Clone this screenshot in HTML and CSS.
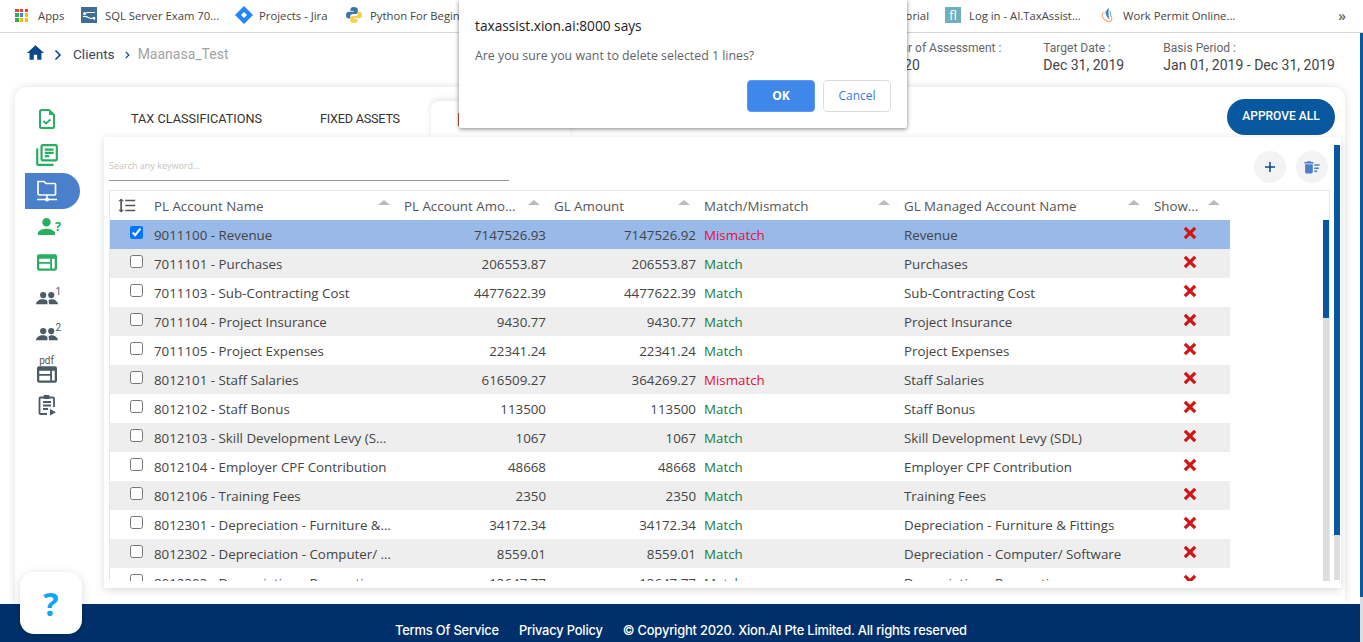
FILE: index.html
```html
<!DOCTYPE html>
<html lang="en">
<head>
<meta charset="utf-8">
<title>Clients - Maanasa_Test</title>
<link rel="stylesheet" href="styles.css">
</head>
<body>
<svg class="defs" width="0" height="0" aria-hidden="true">
  <symbol id="ic-group" viewBox="0 0 26 16">
    <circle cx="8.500" cy="4.500" r="3.700"/><circle cx="18" cy="4.500" r="3.700"/>
    <path d="M0 15.500c0-3.600 4-6 8-6 2.400 0 4.400.8 5.500 2.100v3.900z"/>
    <path d="M14.800 11c1-1 2.200-1.500 3.500-1.500 3.300 0 7.700 2.400 7.700 6H15.500z"/>
  </symbol>
  <symbol id="ic-table" viewBox="0 0 22 18">
    <path fill-rule="evenodd" d="M2 0h18a2 2 0 0 1 2 2v14a2 2 0 0 1-2 2H2a2 2 0 0 1-2-2V2a2 2 0 0 1 2-2zM2.500 5v3.500h12V5zm0 5.500V15.500h12v-5zM16.500 5v10.500h3V5z"/>
  </symbol>
  <symbol id="ic-x" viewBox="0 0 14 14">
    <path d="M3 .7 7 4.700l4-4L13.300 3l-4 4 4 4L11 13.300l-4-4-4 4L.7 11l4-4-4-4z"/>
  </symbol>
</svg>

<header class="bookmarks">
  <div class="bm">
    <span class="apps"><i class="r"></i><i class="r"></i><i class="r"></i><i class="g"></i><i class="b"></i><i class="y"></i><i class="g"></i><i class="y"></i><i class="y"></i></span>
    <span class="bm-t">Apps</span>
  </div>
  <div class="bm bm-sql">
    <svg class="fav" viewBox="0 0 16 16"><rect width="16" height="16" fill="#3f6d93"/><path d="M14 5.500H7C5.500 5.500 4 6 2.500 7.500M2.500 7.500l2.500-.5M2.500 7.500 3.500 5M2 9.500c3-.5 5 .5 6.500 1.500 1.500.7 3.500.7 5.500-.5M14 10.500l-2.500 0M14 10.500 13 13" stroke="#fff" stroke-width="1.200" fill="none"/></svg>
    <span class="bm-t">SQL Server Exam 70...</span>
  </div>
  <div class="bm bm-jira">
    <svg class="fav" viewBox="0 0 18 18"><path d="M9 0l9 9-9 9-9-9z" fill="#2684ff"/><path d="M9 6l3 3-3 3-3-3z" fill="#fff"/></svg>
    <span class="bm-t">Projects - Jira</span>
  </div>
  <div class="bm bm-py">
    <svg class="fav" viewBox="0 0 16 16"><path d="M8 0C5 0 4.500 1 4.500 2.500V4H8v.7H3C1 4.700 0 6 0 8s1 3.500 2.800 3.500H4.200V9.600c0-1.500 1.300-2.600 2.800-2.600h2.800c1.200 0 2-1 2-2.100V2.500C11.800 1 10.500 0 8 0z" fill="#3c76a8"/><path d="M8 16c3 0 3.500-1 3.500-2.500V12H8v-.7h5c2 0 3-1.300 3-3.300s-1-3.500-2.800-3.500h-1.400v1.900c0 1.500-1.300 2.600-2.800 2.600H6.200c-1.200 0-2 1-2 2.100v2.400C4.200 15 5.500 16 8 16z" fill="#f7d04b"/></svg>
    <span class="bm-t">Python For Beginners</span>
    <span class="bm-t bm-end">Tutorial</span>
  </div>
  <div class="bm bm-fl">
    <span class="fl">fl</span>
    <span class="bm-t">Log in - AI.TaxAssist...</span>
  </div>
  <div class="bm bm-wp">
    <svg class="fav" viewBox="0 0 16 18"><path d="M3 6C.5 8 1 12 5 15c3 2 6 2 7 0 .8-2 0-4-1-5" fill="none" stroke="#f0a860" stroke-width="1.300"/><path d="M9 1C6 3 5 6 6 9c.8 2.500 2.500 4 4 5-1.500-3-2-7-1-13z" fill="#2f7fc1"/><path d="M10 3c-.5 3 0 6 2 9-.3-3-.7-6-2-9z" fill="#6aa7d8"/><path d="M6 3.500C4.500 5 4 7 4.500 9c.3-2 .8-4 1.500-5.500z" fill="#4b95d0"/></svg>
    <span class="bm-t">Work Permit Online...</span>
  </div>
  <span class="bm-more">»</span>
</header>

<div class="viewport">
  <div class="page">
    <section class="topbar">
      <nav class="crumbs">
        <svg class="home" viewBox="2 3 20 17"><path d="M10 20v-6h4v6h5v-8h3L12 3 2 12h3v8z"/></svg>
        <svg class="chev chev-1" viewBox="0 0 8 12"><path d="M1.500 1.500 6 6l-4.500 4.500" fill="none" stroke="#07498a" stroke-width="1.600"/></svg>
        <span class="crumb">Clients</span>
        <svg class="chev chev-2" viewBox="0 0 8 12"><path d="M2 2.500 5.500 6 2 9.500" fill="none" stroke="#07498a" stroke-width="1.400"/></svg>
        <span class="crumb crumb-cur">Maanasa_Test</span>
      </nav>
      <div class="meta">
        <div class="meta-i meta-y"><span class="meta-l">Year of Assessment :</span><span class="meta-v">2020</span></div>
        <div class="meta-i meta-t"><span class="meta-l">Target Date :</span><span class="meta-v">Dec 31, 2019</span></div>
        <div class="meta-i"><span class="meta-l">Basis Period :</span><span class="meta-v">Jan 01, 2019 - Dec 31, 2019</span></div>
      </div>
    </section>

    <main class="card">
      <aside class="side">
        <div class="side-i"><svg width="16" height="20" viewBox="0 0 16 20"><path d="M2.500 1H10l5 5v11.500a1.500 1.500 0 0 1-1.500 1.500h-11A1.500 1.500 0 0 1 1 17.500v-15A1.500 1.500 0 0 1 2.500 1z" fill="none" stroke="#27ae60" stroke-width="2"/><path d="M10 1l5 5h-5z" fill="#27ae60"/><path d="M4.500 12l2.500 2.500 4.500-4" fill="none" stroke="#27ae60" stroke-width="1.800"/></svg></div>
        <div class="side-i"><svg width="24" height="24" viewBox="1 1 22 22" fill="#27ae60"><path d="M4 6H2v14c0 1.100.9 2 2 2h14v-2H4V6zm16-4H8c-1.100 0-2 .9-2 2v12c0 1.100.9 2 2 2h12c1.100 0 2-.9 2-2V4c0-1.100-.9-2-2-2zm0 14H8V4h12v12zM10 9h8v2h-8zm0 3h4v2h-4zm0-6h8v2h-8z"/></svg></div>
        <div class="side-i side-on"><svg width="22" height="23" viewBox="0 0 22 23"><path d="M2 2.500h6l2 2h8.500a1 1 0 0 1 1 1V15a1 1 0 0 1-1 1h-15A1.500 1.500 0 0 1 2 14.500z" fill="none" stroke="#fff" stroke-width="1.700"/><path d="M11 16v3M1 20.500h20" stroke="#fff" stroke-width="1.500"/><circle cx="11" cy="20.500" r="2" fill="#fff"/></svg></div>
        <div class="side-i"><span class="ic-wrap"><svg width="17" height="17" viewBox="4 4 16 16" fill="#27ae60"><path d="M12 12c2.210 0 4-1.790 4-4s-1.790-4-4-4-4 1.790-4 4 1.790 4 4 4zm0 2c-2.670 0-8 1.340-8 4v2h16v-2c0-2.660-5.330-4-8-4z"/></svg><b class="q">?</b></span></div>
        <div class="side-i"><svg class="t-g" width="20" height="17"><use href="#ic-table"/></svg></div>
        <div class="side-i"><span class="ic-wrap"><svg class="t-s" width="22" height="14"><use href="#ic-group"/></svg><small class="sup">1</small></span></div>
        <div class="side-i"><span class="ic-wrap"><svg class="t-s" width="22" height="14"><use href="#ic-group"/></svg><small class="sup">2</small></span></div>
        <div class="side-i side-pdf"><small class="pdf">pdf</small><svg class="t-s" width="20" height="17"><use href="#ic-table"/></svg></div>
        <div class="side-i"><svg width="20" height="22" viewBox="0 0 20 22"><path d="M7 2.500h5M3.500 3.500H16a1 1 0 0 1 1 1V13M10 20H3.500a1 1 0 0 1-1-1V4.500a1 1 0 0 1 1-1M6 8h8M6 11.500h8M6 15h5" fill="none" stroke="#4a5b66" stroke-width="1.800"/><rect x="6.500" y="1" width="6" height="4" rx="1" fill="#4a5b66"/><path d="M13 15l6 3.200-6 3.200z" fill="#4a5b66"/></svg></div>
      </aside>

      <div class="content">
        <div class="tabbar">
          <div class="tabs">
            <span class="tab">TAX CLASSIFICATIONS</span>
            <span class="tab tab-2">FIXED ASSETS</span>
            <span class="tab tab-on"><i class="tab-mark"></i></span>
          </div>
          <button class="approve">APPROVE ALL</button>
        </div>

        <section class="panel">
          <div class="tools">
            <input class="search" placeholder="Search any keyword...">
            <div class="tool-btns">
              <button class="round" aria-label="Add"><svg width="12" height="12" viewBox="0 0 12 12"><path d="M6 1v10M1 6h10" stroke="#07498a" stroke-width="1.500"/></svg></button>
              <button class="round" aria-label="Delete"><svg width="16" height="14" viewBox="1.500 3.500 21 16" fill="#4a80c9"><path d="M15 16h4v2h-4zm0-8h7v2h-7zm0 4h6v2h-6zM3 18c0 1.100.9 2 2 2h6c1.100 0 2-.9 2-2V8H3v10zM14 5h-3l-1-1H6L5 5H2v2h12z"/></svg></button>
            </div>
          </div>

          <div class="grid-wrap">
            <table class="grid">
              <colgroup><col class="c0"><col class="c1"><col class="c2"><col class="c2"><col class="c3"><col class="c1"><col class="c4"></colgroup>
              <thead>
                <tr>
                  <th class="sorter"><svg width="19" height="15" viewBox="0 3 23 18" fill="#555"><path d="M6 7h2.500L5 3.500 1.500 7H4v10H1.500L5 20.500 8.500 17H6V7zm4-2v2h12V5H10zm0 14h12v-2H10v2zm0-6h12v-2H10v2z"/></svg></th>
                  <th><div class="th"><span class="th-t">PL Account Name</span><i class="tri"></i></div></th>
                  <th><div class="th"><span class="th-t">PL Account Amo...</span><i class="tri"></i></div></th>
                  <th><div class="th"><span class="th-t">GL Amount</span><i class="tri"></i></div></th>
                  <th><div class="th"><span class="th-t">Match/Mismatch</span><i class="tri"></i></div></th>
                  <th><div class="th"><span class="th-t">GL Managed Account Name</span><i class="tri"></i></div></th>
                  <th><div class="th"><span class="th-t">Show...</span><i class="tri"></i></div></th>
                </tr>
              </thead>
              <tbody>
                <tr class="sel"><td class="ck"><input type="checkbox" checked></td><td>9011100 - Revenue</td><td class="n">7147526.93</td><td class="n">7147526.92</td><td class="bad">Mismatch</td><td>Revenue</td><td class="x"><svg class="xi"><use href="#ic-x"/></svg></td></tr>
                <tr><td class="ck"><input type="checkbox"></td><td>7011101 - Purchases</td><td class="n">206553.87</td><td class="n">206553.87</td><td class="ok">Match</td><td>Purchases</td><td class="x"><svg class="xi"><use href="#ic-x"/></svg></td></tr>
                <tr><td class="ck"><input type="checkbox"></td><td>7011103 - Sub-Contracting Cost</td><td class="n">4477622.39</td><td class="n">4477622.39</td><td class="ok">Match</td><td>Sub-Contracting Cost</td><td class="x"><svg class="xi"><use href="#ic-x"/></svg></td></tr>
                <tr><td class="ck"><input type="checkbox"></td><td>7011104 - Project Insurance</td><td class="n">9430.77</td><td class="n">9430.77</td><td class="ok">Match</td><td>Project Insurance</td><td class="x"><svg class="xi"><use href="#ic-x"/></svg></td></tr>
                <tr><td class="ck"><input type="checkbox"></td><td>7011105 - Project Expenses</td><td class="n">22341.24</td><td class="n">22341.24</td><td class="ok">Match</td><td>Project Expenses</td><td class="x"><svg class="xi"><use href="#ic-x"/></svg></td></tr>
                <tr><td class="ck"><input type="checkbox"></td><td>8012101 - Staff Salaries</td><td class="n">616509.27</td><td class="n">364269.27</td><td class="bad">Mismatch</td><td>Staff Salaries</td><td class="x"><svg class="xi"><use href="#ic-x"/></svg></td></tr>
                <tr><td class="ck"><input type="checkbox"></td><td>8012102 - Staff Bonus</td><td class="n">113500</td><td class="n">113500</td><td class="ok">Match</td><td>Staff Bonus</td><td class="x"><svg class="xi"><use href="#ic-x"/></svg></td></tr>
                <tr><td class="ck"><input type="checkbox"></td><td>8012103 - Skill Development Levy (SDL)</td><td class="n">1067</td><td class="n">1067</td><td class="ok">Match</td><td>Skill Development Levy (SDL)</td><td class="x"><svg class="xi"><use href="#ic-x"/></svg></td></tr>
                <tr><td class="ck"><input type="checkbox"></td><td>8012104 - Employer CPF Contribution</td><td class="n">48668</td><td class="n">48668</td><td class="ok">Match</td><td>Employer CPF Contribution</td><td class="x"><svg class="xi"><use href="#ic-x"/></svg></td></tr>
                <tr><td class="ck"><input type="checkbox"></td><td>8012106 - Training Fees</td><td class="n">2350</td><td class="n">2350</td><td class="ok">Match</td><td>Training Fees</td><td class="x"><svg class="xi"><use href="#ic-x"/></svg></td></tr>
                <tr><td class="ck"><input type="checkbox"></td><td>8012301 - Depreciation - Furniture &amp; Fittings</td><td class="n">34172.34</td><td class="n">34172.34</td><td class="ok">Match</td><td>Depreciation - Furniture &amp; Fittings</td><td class="x"><svg class="xi"><use href="#ic-x"/></svg></td></tr>
                <tr><td class="ck"><input type="checkbox"></td><td>8012302 - Depreciation - Computer/ Software</td><td class="n">8559.01</td><td class="n">8559.01</td><td class="ok">Match</td><td>Depreciation - Computer/ Software</td><td class="x"><svg class="xi"><use href="#ic-x"/></svg></td></tr>
                <tr><td class="ck"><input type="checkbox"></td><td>8012303 - Depreciation - Renovation</td><td class="n">13647.77</td><td class="n">13647.77</td><td class="ok">Match</td><td>Depreciation - Renovation</td><td class="x"><svg class="xi"><use href="#ic-x"/></svg></td></tr>
              </tbody>
            </table>
            <div class="vbar vbar-in"><i class="thumb thumb-in"></i></div>
          </div>
          <div class="vbar vbar-out"><i class="thumb thumb-out"></i></div>
        </section>
      </div>
    </main>

    <footer class="foot">
      <a>Terms Of Service</a>
      <a>Privacy Policy</a>
      <span>© Copyright 2020. Xion.AI Pte Limited. All rights reserved</span>
    </footer>
  </div>
  <div class="pagebar"><i class="pagethumb"></i></div>
</div>

<button class="help" aria-label="Help">?</button>

<div class="dialog" role="dialog">
  <div class="dlg-title">taxassist.xion.ai:8000 says</div>
  <div class="dlg-msg">Are you sure you want to delete selected 1 lines?</div>
  <div class="dlg-btns">
    <button class="dlg-ok">OK</button>
    <button class="dlg-cancel">Cancel</button>
  </div>
</div>
</body>
</html>
```

FILE: styles.css
```css
* { box-sizing: border-box; }
html, body { margin: 0; padding: 0; }
body {
  width: 1363px;
  height: 642px;
  overflow: hidden;
  position: relative;
  background: #fff;
  font-family: "Open Sans", "Liberation Sans", sans-serif;
  color: #444;
  display: flex;
  flex-direction: column;
}
.defs { position: absolute; }

/* bookmarks */
.bookmarks {
  height: 33px;
  flex: none;
  display: flex;
  align-items: center;
  padding-bottom: 2px;
  background: #fff;
  border-bottom: 1px solid #d5d5d5;
  font-size: 11.300px;
  color: #444;
  position: relative;
  z-index: 2;
}
.bm { display: flex; align-items: center; flex: none; height: 100%; }
.bm:first-child { margin-left: 15px; width: 66px; }
.bm-sql { width: 154px; }
.bm-jira { width: 111px; }
.bm-py { width: 599px; }
.bm-fl { width: 155px; }
.bm-end { margin-left: auto; padding-right: 16px; }
.bm-t { white-space: nowrap; }
.apps { display: grid; grid-template-columns: repeat(3, 3.500px); gap: 1.250px; margin-right: 10px; }
.apps i { width: 3.500px; height: 3.500px; display: block; }
.apps .r { background: #e94335; }
.apps .y { background: #fbbc05; }
.apps .b { background: #4285f4; }
.apps .g { background: #34a853; }
.fav { width: 16px; height: 16px; margin-right: 8px; flex: none; }
.bm-jira .fav { width: 18px; height: 18px; margin-right: 6px; }
.fl { width: 16px; height: 16px; margin-right: 8px; background: #6fb0bd; color: #fff; font-size: 13px; line-height: 16px; text-align: center; }
.bm-wp .fav { margin-right: 7px; }
.bm-more { margin-left: 103px; font-size: 14px; color: #666; font-weight: 600; }

/* shell */
.viewport { flex: 1; display: flex; min-height: 0; }
.page { flex: 1; display: flex; flex-direction: column; min-width: 0; }
.pagebar { width: 3px; flex: none; background: #ddd; }
.pagethumb { display: block; height: 564px; background: #07589f; }

/* top bar */
.topbar {
  height: 54px;
  flex: none;
  display: flex;
  justify-content: space-between;
  padding: 8px 25px 0 27px;
  font-family: Roboto, "Liberation Sans", sans-serif;
}
.crumbs { display: flex; align-items: center; height: 26px; font-size: 13.600px; }
.home { width: 17px; height: 15px; fill: #07498a; margin-top: -4px; }
.chev { width: 8px; height: 12px; }
.chev-1 { margin: 2px 11px 0 10px; }
.chev-2 { margin: 1px 7px 0 9px; width: 7px; }
.crumb { color: #33475b; }
.crumb-cur { color: #a3a3a3; font-size: 14px; }
.meta { display: flex; }
.meta-i { display: flex; flex-direction: column; }
.meta-y { width: 155px; }
.meta-t { width: 120px; }
.meta-l { font-size: 12px; line-height: 15px; color: #666; }
.meta-v { font-size: 14px; line-height: 19px; color: #444; }

/* card */
.card {
  flex: 1;
  min-height: 0;
  margin: 0 15px 0 15px;
  background: #fff;
  border-radius: 12px 12px 0 0;
  box-shadow: 0 0 10px rgba(0,0,0,.12);
  display: flex;
  padding: 12px 4px 0 0;
}
.side { width: 89px; flex: none; padding-top: 2.500px; }
.side-i { height: 35.750px; display: flex; align-items: center; justify-content: center; margin-right: 24px; margin-left: 10px; padding-right: 12px; }
.side-on { background: #4a7fcb; border-radius: 0 18px 18px 0; }
.ic-wrap { position: relative; display: block; line-height: 0; }
.q { position: absolute; left: 17px; top: 1px; font: bold 13px/15px "Open Sans", sans-serif; color: #27ae60; }
.sup { position: absolute; left: 20px; top: -5px; font: 10px/11px Roboto, sans-serif; color: #4a5b66; }
.t-g { fill: #27ae60; }
.t-s { fill: #4a5b66; }
.side-pdf { flex-direction: column; }
.pdf { font: 10px/10px Roboto, sans-serif; color: #555; }
.content { flex: 1; min-width: 0; display: flex; flex-direction: column; }
.tabbar { height: 38px; flex: none; display: flex; justify-content: space-between; }
.tabs { display: flex; margin-left: -2px; align-items: flex-end; height: 100%; }
.tab {
  padding: 0 29px 2px;
  height: 36px;
  display: flex;
  align-items: center;
  font: 12.700px Roboto, sans-serif;
  color: #333;
  white-space: nowrap;
}
.tab-2 { width: 140px; letter-spacing: -.25px; }
.tab-on {
  width: 139px;
  padding: 0 0 0 27px;
  background: #fff;
  border-radius: 8px 8px 0 0;
  box-shadow: 0 -2px 6px rgba(0,0,0,.1);
}
.tab-mark { display: block; width: 2px; height: 13px; background: #b5533c; }
.approve {
  width: 108px;
  height: 36px;
  margin-right: 6px;
  border: 0;
  border-radius: 18px;
  background: #07589f;
  color: #fff;
  font: 500 12px Roboto, sans-serif;
  padding: 0 0 2px;
}

/* panel */
.panel {
  flex: none;
  height: 451px;
  background: #fff;
  box-shadow: 0 2px 8px rgba(0,0,0,.15);
  padding: 0 5px 7px 5px;
  position: relative;
  display: flex;
  flex-direction: column;
}
.tools { height: 53px; flex: none; display: flex; justify-content: space-between; }
.search {
  width: 400px;
  height: 26px;
  margin-top: 18px;
  padding: 0 0 4px;
  border: 0;
  border-bottom: 1px solid #999;
  outline: 0;
  font: 9px "Open Sans", sans-serif;
  background: transparent;
}
.search::placeholder { color: #c4c4c4; }
.tool-btns { display: flex; gap: 10px; padding: 14px 8px 0 0; }
.round { width: 32px; height: 32px; border: 0; border-radius: 50%; background: #f3f3f3; padding: 0; display: flex; align-items: center; justify-content: center; }

.grid-wrap {
  flex: 1;
  min-height: 0;
  width: 1221px;
  overflow: hidden;
  position: relative;
  border: 1px solid #e6e6e6;
  border-bottom: 0;
}
.grid { width: 1120px; table-layout: fixed; border-collapse: collapse; font-size: 13.330px; color: #444; }
.c0 { width: 40px; }
.c1 { width: 250px; }
.c2 { width: 150px; }
.c3 { width: 200px; }
.c4 { width: 80px; }
.grid th { height: 29px; padding: 0; font-weight: 400; text-align: left; color: #555; }
.sorter { padding-left: 7px !important; line-height: 0; }
.th { display: flex; justify-content: space-between; align-items: center; padding: 1px 10px 0 4px; }
.th-t { white-space: nowrap; }
.tri { width: 0; height: 0; border-left: 6px solid transparent; border-right: 6px solid transparent; border-bottom: 5px solid #bbb; margin-top: -7px; }
.grid td {
  height: 29px;
  padding: 1px 7px 0 4px;
  white-space: nowrap;
  overflow: hidden;
  text-overflow: ellipsis;
}
.grid tbody tr:nth-child(even) { background: #eee; }
.grid tbody tr.sel { background: #99b9e8; }
.grid td.ck { padding: 0 0 5px 20px; line-height: 0; }
.ck input { margin: 0; width: 13px; height: 13px; }
.grid td.n { text-align: right; padding-right: 4px; }
.ok { color: #1a7a35; }
.bad { color: #e0103a; }
.grid td.x { text-align: center; padding: 0 0 4px 0; line-height: 0; }
.xi { width: 14px; height: 14px; fill: #d01515; }

.vbar { position: absolute; width: 6px; background: #ddd; }
.thumb { display: block; background: #07589f; }
.vbar-in { right: 0; top: 29px; bottom: 0; }
.thumb-in { height: 98px; }
.vbar-out { right: 1px; top: 8px; bottom: 8px; }
.thumb-out { height: 390px; }

/* footer */
.foot {
  height: 38px;
  flex: none;
  background: #00306b;
  color: #fff;
  display: flex;
  align-items: center;
  padding: 14px 0 0 395px;
  gap: 20px;
  font: 500 12.900px Inter, sans-serif;
  letter-spacing: -.19px;
}

/* floating */
.help {
  position: absolute;
  left: 20px;
  top: 572px;
  width: 62px;
  height: 62px;
  border: 0;
  border-radius: 14px;
  background: #fff;
  box-shadow: 0 2px 10px rgba(0,0,0,.15);
  color: #0ea5f5;
  font: 700 32px "Open Sans", sans-serif;
  padding: 0;
}
.dialog {
  position: absolute;
  left: 459px;
  top: 0;
  width: 448px;
  height: 128px;
  background: #fff;
  border-radius: 0 0 2px 2px;
  box-shadow: 0 1px 4px rgba(0,0,0,.5);
  padding: 16px 16px 0;
  z-index: 5;
}
.dlg-title { font-size: 13.700px; line-height: 20px; color: #222; }
.dlg-msg { font-size: 12.350px; line-height: 18px; margin-top: 11px; color: #5f6368; }
.dlg-btns { display: flex; justify-content: flex-end; gap: 8px; margin-top: 15px; }
.dlg-btns button { width: 68px; height: 32px; border-radius: 4px; font: 12px "Open Sans", sans-serif; padding: 0 0 2px; }
.dlg-ok { background: #3f88ea; border: 1px solid #5a9bef; color: #fff; font-weight: 700 !important; }
.dlg-cancel { background: #fff; border: 1px solid #dadce0; color: #3b78e7; }
```
